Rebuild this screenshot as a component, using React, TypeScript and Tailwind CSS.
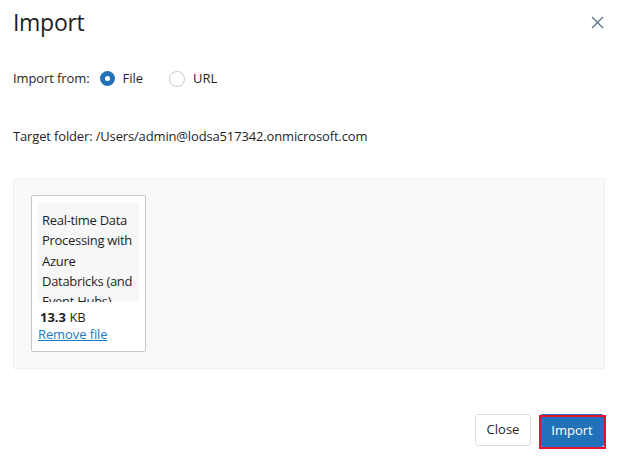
import React from 'react'

const font = { fontFamily: '"Open Sans", "Noto Sans", sans-serif' }

const Radio = ({ checked, label }: { checked: boolean; label: string }) => (
  <label className="flex items-center gap-2">
    {checked ? (
      <span className="flex h-[15px] w-[15px] items-center justify-center rounded-full bg-[#2272b9]">
        <span className="h-[5px] w-[5px] rounded-full bg-white" />
      </span>
    ) : (
      <span className="h-[16px] w-[16px] rounded-full border border-[#c4ccd4] bg-white" />
    )}
    <span className="text-[13px] text-[#1f1f1f]">{label}</span>
  </label>
)

export default function App() {
  return (
    <div className="h-[467px] w-[622px] bg-white text-[#1f1f1f]" style={font}>
      <div className="flex items-start justify-between pl-[13px] pr-[18px] pt-[6px]">
        <h1 className="text-[23px] leading-[32px] tracking-[-0.3px]">Import</h1>
        <button className="mt-[10px] text-[#5a7186]">
          <svg width="13" height="13" viewBox="0 0 13 13" fill="none" stroke="currentColor" strokeWidth="1.3">
            <path d="M1 1 L12 12 M12 1 L1 12" />
          </svg>
        </button>
      </div>

      <div className="mt-[31px] flex items-center pl-[13px] text-[13px]">
        <span className="mr-[10px] tracking-[-0.1px]">Import from:</span>
        <Radio checked label="File" />
        <span className="w-[26px]" />
        <Radio checked={false} label="URL" />
      </div>

      <p className="mt-[38px] pl-[13px] text-[13px] tracking-[-0.15px]">
        Target folder: /Users/admin@lodsa517342.onmicrosoft.com
      </p>

      <div className="ml-[13px] mr-[17px] mt-[32px] h-[191px] rounded-[2px] border border-[#f0f0f0] bg-[#f9f9f9] pl-[17px] pt-[16px]">
        <div className="w-[115px] rounded-[2px] border border-[#c8c8c8] bg-white px-[6px] pb-[8px] pt-[6px]">
          <div className="h-[100px] overflow-hidden bg-[#f7f7f7] px-[4px] pt-[8px] text-[13px] leading-[20.3px] tracking-[-0.3px]">
            Real-time Data Processing with Azure Databricks (and Event Hubs)
          </div>
          <div className="mt-[6px] pl-[2px] text-[13px] leading-[18px]">
            <span className="font-bold">13.3</span> KB
          </div>
          <a href="#" className="block text-[13px] leading-[17px] tracking-[-0.1px] text-[#1f77c0] underline">
            Remove file
          </a>
        </div>
      </div>

      <div className="mt-[45px] flex justify-end gap-[9px] pr-[18px]">
        <button className="h-[32px] w-[56px] rounded-[3px] border border-[#d5dde5] bg-white text-[13px] text-[#1f1f1f]">
          Close
        </button>
        <div className="relative">
          <button className="h-[33px] w-[64px] rounded-[3px] bg-[#2272b9] text-[13px] text-white">
            Import
          </button>
          <span className="pointer-events-none absolute left-[-1px] top-[1px] h-[34px] w-[67px] border-2 border-[#e8112d]" />
        </div>
      </div>
    </div>
  )
}
